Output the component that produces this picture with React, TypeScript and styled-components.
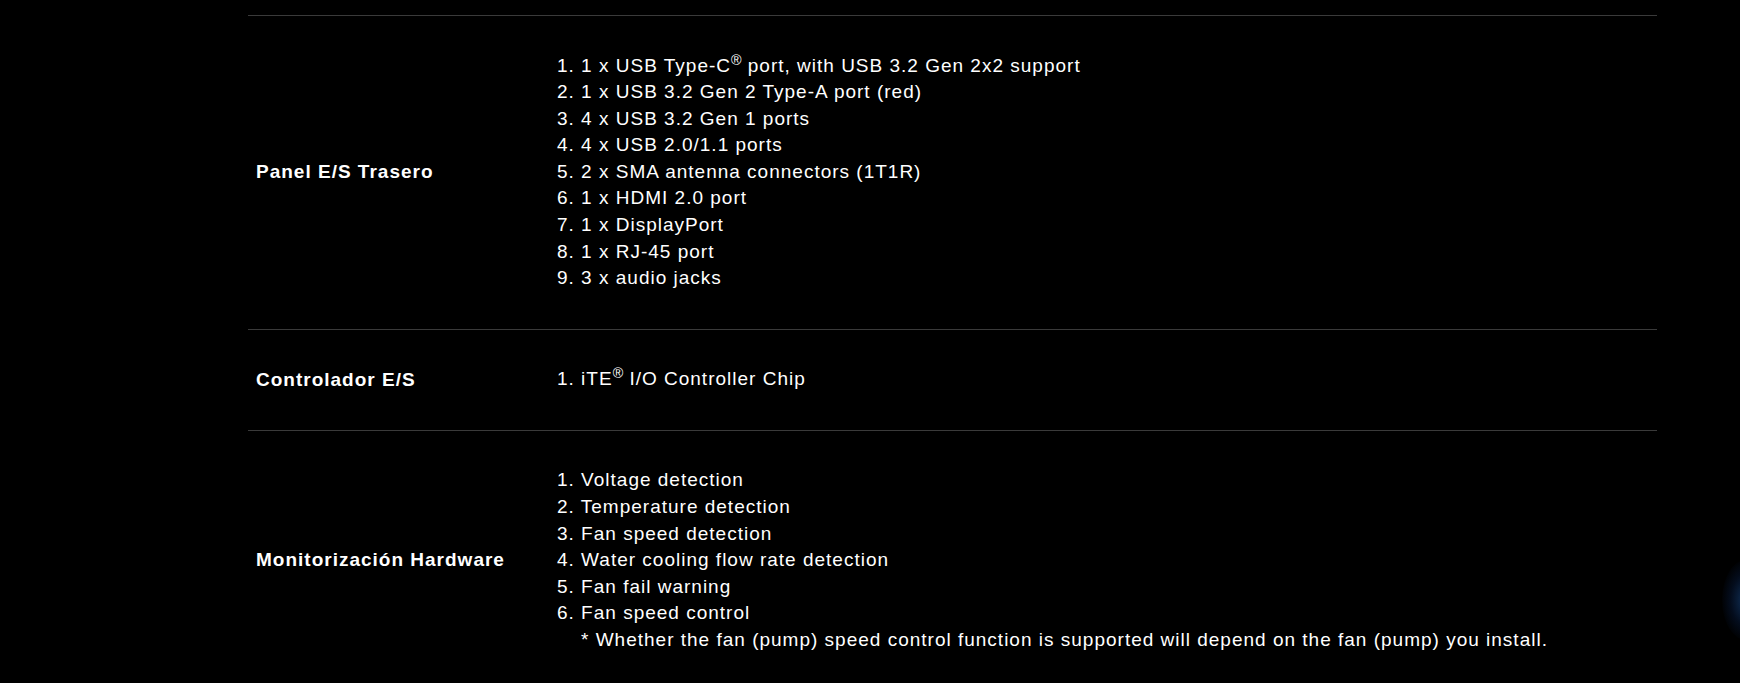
import React from "react";
import styled, { createGlobalStyle } from "styled-components";

const Global = createGlobalStyle`
  html, body { margin: 0; padding: 0; background: #000; }
  body { font-family: "Liberation Sans", Arial, sans-serif; color: #fff; }
`;

const Page = styled.div`
  position: relative;
  width: 1740px;
  height: 683px;
  overflow: hidden;
  background: #000;
  padding-top: 15px;
  box-sizing: border-box;
`;

const Table = styled.div`
  margin-left: 248px;
  width: 1409px;
`;

const Row = styled.div`
  display: grid;
  grid-template-columns: 301px 1fr;
  border-top: 1px solid #3a3a3a;
`;

const Label = styled.div`
  display: flex;
  align-items: center;
  padding: 0 8px;
  font-size: 19px;
  letter-spacing: 1px;
  font-weight: 700;
  line-height: 26.6px;
`;

const Value = styled.div`
  padding: 36.5px 8px 37px;
  font-size: 19px;
  letter-spacing: 1px;
  line-height: 26.6px;
`;

const Line = styled.div<{ $indent?: boolean }>`
  padding-left: ${(p) => (p.$indent ? "24px" : "0")};
  white-space: nowrap;
`;

const Sup = styled.sup`
  font-size: 0.75em;
  line-height: 0;
  letter-spacing: 0;
`;

const Glow = styled.div`
  position: absolute;
  right: -30px;
  top: 560px;
  width: 48px;
  height: 80px;
  border-radius: 50%;
  background: radial-gradient(ellipse at center, rgba(40, 120, 220, 0.4) 0%, rgba(20, 70, 160, 0.18) 45%, rgba(0, 0, 0, 0) 75%);
`;

type Spec = { label: string; lines: React.ReactNode[]; note?: string };

const specs: Spec[] = [
  {
    label: "Panel E/S Trasero",
    lines: [
      <>1. 1 x USB Type-C<Sup>®</Sup> port, with USB 3.2 Gen 2x2 support</>,
      "2. 1 x USB 3.2 Gen 2 Type-A port (red)",
      "3. 4 x USB 3.2 Gen 1 ports",
      "4. 4 x USB 2.0/1.1 ports",
      "5. 2 x SMA antenna connectors (1T1R)",
      "6. 1 x HDMI 2.0 port",
      "7. 1 x DisplayPort",
      "8. 1 x RJ-45 port",
      "9. 3 x audio jacks",
    ],
  },
  {
    label: "Controlador E/S",
    lines: [<>1. iTE<Sup>®</Sup> I/O Controller Chip</>],
  },
  {
    label: "Monitorización Hardware",
    lines: [
      "1. Voltage detection",
      "2. Temperature detection",
      "3. Fan speed detection",
      "4. Water cooling flow rate detection",
      "5. Fan fail warning",
      "6. Fan speed control",
    ],
    note: "* Whether the fan (pump) speed control function is supported will depend on the fan (pump) you install.",
  },
];

export default function App() {
  return (
    <Page>
      <Global />
      <Table>
        {specs.map((s) => (
          <Row key={s.label}>
            <Label>{s.label}</Label>
            <Value>
              {s.lines.map((l, i) => (
                <Line key={i}>{l}</Line>
              ))}
              {s.note && <Line $indent>{s.note}</Line>}
            </Value>
          </Row>
        ))}
      </Table>
      <Glow />
    </Page>
  );
}
